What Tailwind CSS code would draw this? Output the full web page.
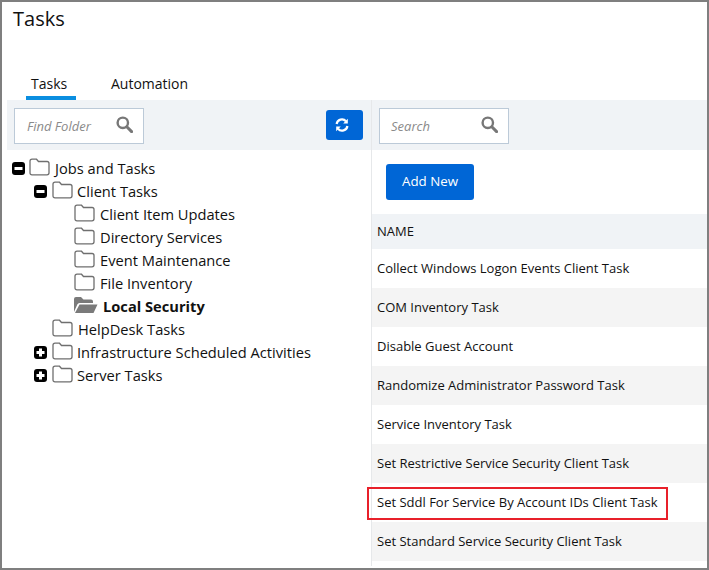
<!DOCTYPE html>
<html>
<head>
<meta charset="utf-8">
<script src="https://cdn.jsdelivr.net/npm/@tailwindcss/browser@4"></script>
</head>
<body class="m-0 bg-white">
<div class="relative w-[709px] h-[570px] overflow-hidden border-2 border-[#7f7f7f] bg-white font-['Open_Sans',sans-serif] text-[#111]">
  <h1 class="pl-[11px] pt-[3px] h-[58px] text-[20px] leading-[27px] font-normal">Tasks</h1>
  <div class="flex h-[40px] pl-[24px] text-[14px] leading-[19px]">
    <div class="w-[50px] h-[40px] pt-[14px] pl-[5px] border-b-4 border-[#0a8ee0]">Tasks</div>
    <div class="ml-[35px] pt-[14px]">Automation</div>
  </div>
  <div class="ml-[5px] flex h-[466px]">
    <div class="w-[364px] shrink-0">
      <div class="h-[50px] bg-[#f0f3f6] flex items-center justify-between pl-[7px] pr-[8px]">
        <div class="w-[130px] h-[36px] mt-[2px] border border-[#bccad8] bg-white flex items-center justify-between pl-[12px] pr-[10px] text-[13px] italic text-[#8a8a8a]">
          <span class="mt-[1px]">Find Folder</span>
          <svg class="-mt-[3px]" width="17" height="17" viewBox="0 0 17 17" fill="none" stroke="#777" stroke-width="2.4"><circle cx="6.8" cy="6.8" r="5.2"/><path d="M10.8 10.8L15.6 15.6" stroke-width="3" stroke-linecap="round"/></svg>
        </div>
        <div class="w-[37px] h-[30px] rounded-[3px] bg-[#0066d6] flex items-center justify-center pr-[6px]">
          <svg width="14" height="14" viewBox="0 0 14 14" fill="none" stroke="#fff" stroke-width="2.2"><path d="M1.6 6A5.4 5.4 0 0 1 11 3.2"/><path d="M12.4 8A5.4 5.4 0 0 1 3 10.8"/><path d="M12.8 .8V5.4H8.2Z" fill="#fff" stroke="none"/><path d="M1.2 13.2V8.6H5.8Z" fill="#fff" stroke="none"/></svg>
        </div>
      </div>
      <ul class="pt-[7px] text-[14.67px] leading-[23px]">
        <li class="flex items-center h-[23px] pl-[5px]">
          <svg class="mr-[4px] shrink-0" width="13" height="13" viewBox="0 0 13 13"><rect width="13" height="13" rx="3" fill="#000"/><rect x="2.5" y="5" width="8" height="3" fill="#fff"/></svg>
          <svg class="shrink-0 -mt-[4px]" width="21" height="18" viewBox="0 0 21 18" fill="none" stroke="#6f6f6f" stroke-width="1.3"><path d="M1 3.2Q1 1.2 3 1.2H7.5L9.5 3.5H18Q20 3.5 20 5.5V14.8Q20 16.8 18 16.8H3Q1 16.8 1 14.8Z"/></svg>
          <span class="ml-[5px]">Jobs and Tasks</span>
        </li>
        <li class="flex items-center h-[23px] pl-[27px]">
          <svg class="mr-[5px] shrink-0" width="13" height="13" viewBox="0 0 13 13"><rect width="13" height="13" rx="3" fill="#000"/><rect x="2.5" y="5" width="8" height="3" fill="#fff"/></svg>
          <svg class="shrink-0 -mt-[4px]" width="21" height="18" viewBox="0 0 21 18" fill="none" stroke="#6f6f6f" stroke-width="1.3"><path d="M1 3.2Q1 1.2 3 1.2H7.5L9.5 3.5H18Q20 3.5 20 5.5V14.8Q20 16.8 18 16.8H3Q1 16.8 1 14.8Z"/></svg>
          <span class="ml-[4px]">Client Tasks</span>
        </li>
        <li class="flex items-center h-[23px] pl-[67px]">
          <svg class="shrink-0 -mt-[4px]" width="21" height="18" viewBox="0 0 21 18" fill="none" stroke="#6f6f6f" stroke-width="1.3"><path d="M1 3.2Q1 1.2 3 1.2H7.5L9.5 3.5H18Q20 3.5 20 5.5V14.8Q20 16.8 18 16.8H3Q1 16.8 1 14.8Z"/></svg>
          <span class="ml-[5px]">Client Item Updates</span>
        </li>
        <li class="flex items-center h-[23px] pl-[67px]">
          <svg class="shrink-0 -mt-[4px]" width="21" height="18" viewBox="0 0 21 18" fill="none" stroke="#6f6f6f" stroke-width="1.3"><path d="M1 3.2Q1 1.2 3 1.2H7.5L9.5 3.5H18Q20 3.5 20 5.5V14.8Q20 16.8 18 16.8H3Q1 16.8 1 14.8Z"/></svg>
          <span class="ml-[5px]">Directory Services</span>
        </li>
        <li class="flex items-center h-[23px] pl-[67px]">
          <svg class="shrink-0 -mt-[4px]" width="21" height="18" viewBox="0 0 21 18" fill="none" stroke="#6f6f6f" stroke-width="1.3"><path d="M1 3.2Q1 1.2 3 1.2H7.5L9.5 3.5H18Q20 3.5 20 5.5V14.8Q20 16.8 18 16.8H3Q1 16.8 1 14.8Z"/></svg>
          <span class="ml-[5px]">Event Maintenance</span>
        </li>
        <li class="flex items-center h-[23px] pl-[67px]">
          <svg class="shrink-0 -mt-[4px]" width="21" height="18" viewBox="0 0 21 18" fill="none" stroke="#6f6f6f" stroke-width="1.3"><path d="M1 3.2Q1 1.2 3 1.2H7.5L9.5 3.5H18Q20 3.5 20 5.5V14.8Q20 16.8 18 16.8H3Q1 16.8 1 14.8Z"/></svg>
          <span class="ml-[5px]">File Inventory</span>
        </li>
        <li class="flex items-center h-[23px] pl-[67px]">
          <svg class="shrink-0 -mt-[4px]" width="24" height="18" viewBox="0 0 24 18"><path d="M0 16V3Q0 1 2 1H7L9.5 3.5H17Q19 3.5 19 5.5V7H5.5Q4 7 3.3 8.5Z" fill="#7a7a7a"/><path d="M5.5 8.5H23.5L19.5 17H1Z" fill="#7a7a7a"/></svg>
          <span class="ml-[5px] font-bold">Local Security</span>
        </li>
        <li class="flex items-center h-[23px] pl-[45px]">
          <svg class="shrink-0 -mt-[4px]" width="21" height="18" viewBox="0 0 21 18" fill="none" stroke="#6f6f6f" stroke-width="1.3"><path d="M1 3.2Q1 1.2 3 1.2H7.5L9.5 3.5H18Q20 3.5 20 5.5V14.8Q20 16.8 18 16.8H3Q1 16.8 1 14.8Z"/></svg>
          <span class="ml-[5px]">HelpDesk Tasks</span>
        </li>
        <li class="flex items-center h-[23px] pl-[27px]">
          <svg class="mr-[5px] shrink-0" width="13" height="13" viewBox="0 0 13 13"><rect width="13" height="13" rx="3" fill="#000"/><path d="M2.5 5H5V2.5H8V5H10.5V8H8V10.5H5V8H2.5Z" fill="#fff"/></svg>
          <svg class="shrink-0 -mt-[4px]" width="21" height="18" viewBox="0 0 21 18" fill="none" stroke="#6f6f6f" stroke-width="1.3"><path d="M1 3.2Q1 1.2 3 1.2H7.5L9.5 3.5H18Q20 3.5 20 5.5V14.8Q20 16.8 18 16.8H3Q1 16.8 1 14.8Z"/></svg>
          <span class="ml-[4px]">Infrastructure Scheduled Activities</span>
        </li>
        <li class="flex items-center h-[23px] pl-[27px]">
          <svg class="mr-[5px] shrink-0" width="13" height="13" viewBox="0 0 13 13"><rect width="13" height="13" rx="3" fill="#000"/><path d="M2.5 5H5V2.5H8V5H10.5V8H8V10.5H5V8H2.5Z" fill="#fff"/></svg>
          <svg class="shrink-0 -mt-[4px]" width="21" height="18" viewBox="0 0 21 18" fill="none" stroke="#6f6f6f" stroke-width="1.3"><path d="M1 3.2Q1 1.2 3 1.2H7.5L9.5 3.5H18Q20 3.5 20 5.5V14.8Q20 16.8 18 16.8H3Q1 16.8 1 14.8Z"/></svg>
          <span class="ml-[4px]">Server Tasks</span>
        </li>
      </ul>
    </div>
    <div class="flex-1 border-l border-[#e6e8ea]">
      <div class="h-[50px] bg-[#f0f3f6] flex items-center pl-[7px]">
        <div class="w-[130px] h-[36px] mt-[2px] border border-[#bccad8] bg-white flex items-center justify-between pl-[11px] pr-[10px] text-[13px] italic text-[#8a8a8a]">
          <span class="mt-[1px]">Search</span>
          <svg class="-mt-[3px]" width="17" height="17" viewBox="0 0 17 17" fill="none" stroke="#777" stroke-width="2.4"><circle cx="6.8" cy="6.8" r="5.2"/><path d="M10.8 10.8L15.6 15.6" stroke-width="3" stroke-linecap="round"/></svg>
        </div>
      </div>
      <div class="h-[64px] pt-[14px] pl-[14px]">
        <button class="w-[88px] h-[36px] rounded-[3px] bg-[#0066d6] text-white text-[13.33px] font-medium">Add New</button>
      </div>
      <div class="h-[35px] pt-[1px] bg-[#f0f3f6] pl-[5px] flex items-center text-[13px]">NAME</div>
      <div class="text-[13px]">
        <div class="h-[39px] pt-[1px] pl-[5px] flex items-center bg-white">Collect Windows Logon Events Client Task</div>
        <div class="h-[39px] pt-[1px] pl-[5px] flex items-center bg-[#f4f4f4]">COM Inventory Task</div>
        <div class="h-[39px] pt-[1px] pl-[5px] flex items-center bg-white">Disable Guest Account</div>
        <div class="h-[39px] pt-[1px] pl-[5px] flex items-center bg-[#f4f4f4]">Randomize Administrator Password Task</div>
        <div class="h-[39px] pt-[1px] pl-[5px] flex items-center bg-white">Service Inventory Task</div>
        <div class="h-[39px] pt-[1px] pl-[5px] flex items-center bg-[#f4f4f4]">Set Restrictive Service Security Client Task</div>
        <div class="h-[39px] pt-[1px] pl-[5px] flex items-center bg-white">Set Sddl For Service By Account IDs Client Task</div>
        <div class="h-[39px] pt-[1px] pl-[5px] flex items-center bg-[#f4f4f4]">Set Standard Service Security Client Task</div>
      </div>
    </div>
  </div>
  <div class="absolute left-[365px] top-[485px] w-[301px] h-[33px] border-2 border-[#e8202a]"></div>
</div>
</body>
</html>
